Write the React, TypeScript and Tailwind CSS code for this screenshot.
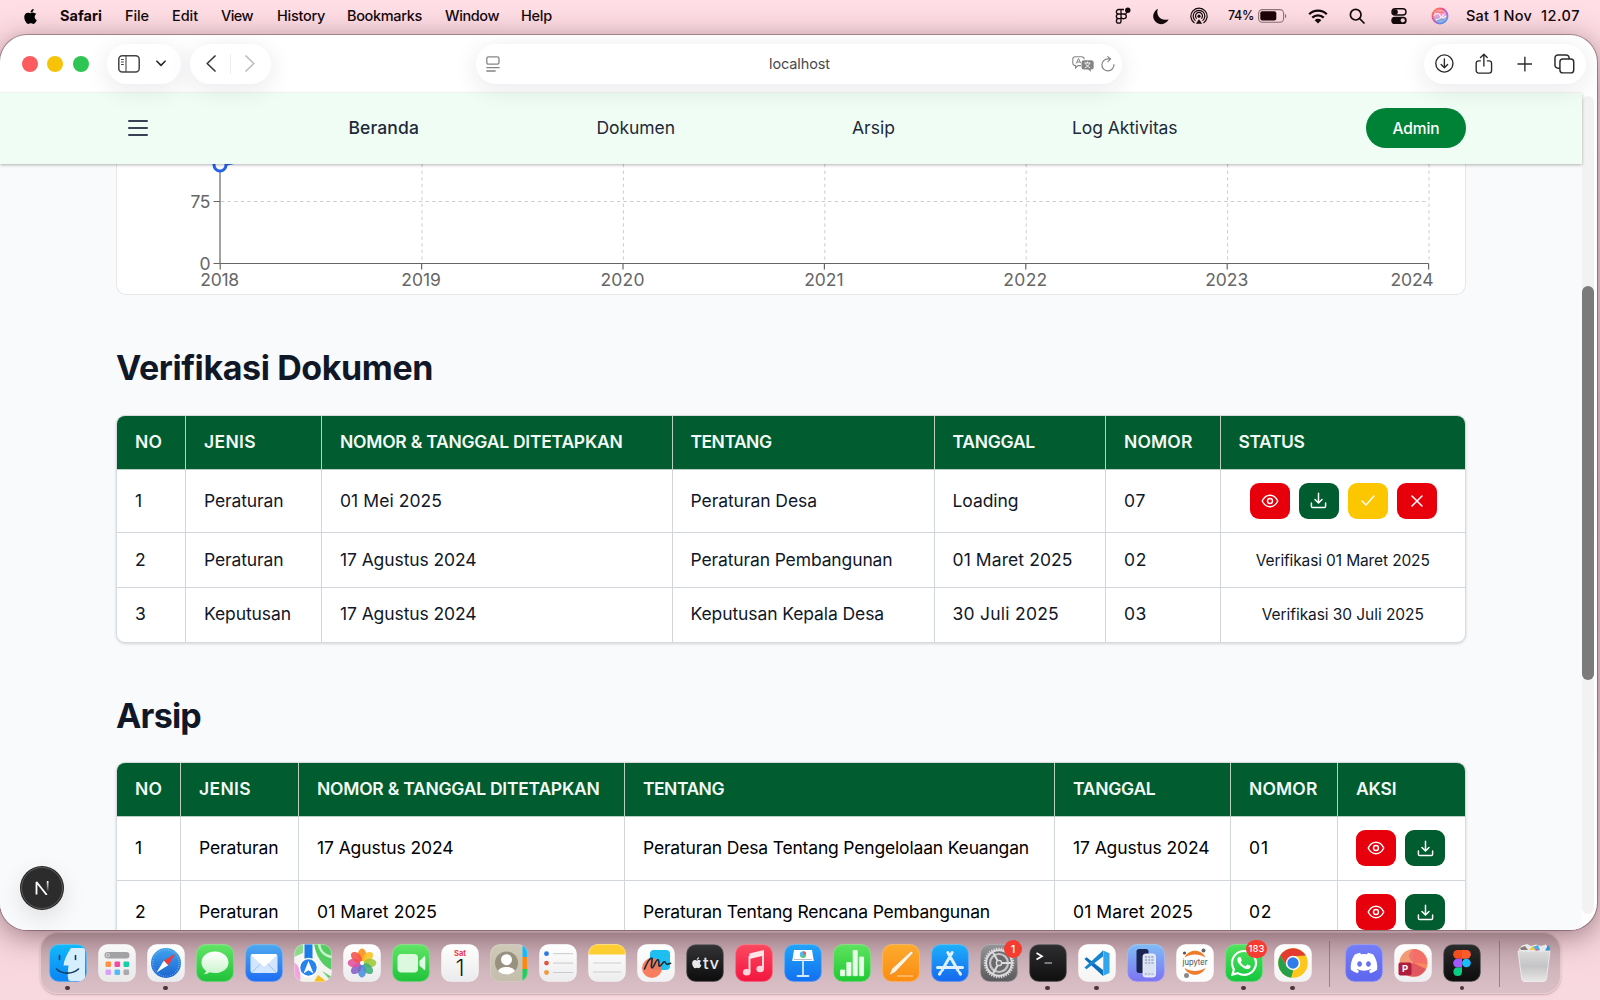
import React, { useLayoutEffect, useRef, useState } from "react";
import { FaApple, FaDiscord, FaWhatsapp } from "react-icons/fa";

/* A single line of text tracked so that it fills exactly `w` pixels. */
function T({ w, className = "", children }: { w: number; className?: string; children: string }) {
  const ref = useRef<HTMLSpanElement>(null);
  const [ls, setLs] = useState(0);
  useLayoutEffect(() => {
    const el = ref.current;
    if (!el) return;
    el.style.letterSpacing = "0px";
    const natural = el.getBoundingClientRect().width;
    const next = (w - natural) / children.length;
    el.style.letterSpacing = next + "px";
    setLs(next);
  }, [w, children]);
  return (
    <span ref={ref} className={"inline-block shrink-0 whitespace-pre " + className} style={{ letterSpacing: ls + "px" }}>
      {children}
    </span>
  );
}

/* ---------------------------------------------------------------- menu bar */

function MenuBar() {
  return (
    <div className="relative flex h-[35px] shrink-0 items-center pl-[22px] pr-[20px] pb-[3px] text-[14.500px] font-medium text-[#12080b]">
      <FaApple className="mr-[21px] size-[17px] text-black" />
      <T w={42} className="mr-[23px] font-bold">Safari</T>
      <T w={24} className="mr-[23px]">File</T>
      <T w={26} className="mr-[23px]">Edit</T>
      <T w={32} className="mr-[24px]">View</T>
      <T w={48} className="mr-[22px]">History</T>
      <T w={75} className="mr-[23px]">Bookmarks</T>
      <T w={54} className="mr-[22px]">Window</T>
      <T w={31}>Help</T>
      <div className="ml-auto flex items-center">
        <svg className="mr-[21px] h-[18px] w-[16px]" viewBox="0 0 16 18" fill="none" stroke="currentColor" strokeWidth="1.3">
          <path d="M6 2.5H3.6a2.2 2.2 0 000 4.5H6zM6 2.5h3M6 7H3.600a2.300 2.300 0 000 4.600H6zM6 7h3a2.300 2.300 0 110 4.600A2.300 2.300 0 016 9.300zM6 11.600H3.600A2.300 2.300 0 106 13.900zM6 7V2.500M6 7h4.500c1.500-.6 1-2 1-2" />
          <circle cx="12.800" cy="3.300" r="2.700" fill="currentColor" stroke="none" />
        </svg>
        <svg className="mr-[21px] size-[17px]" viewBox="0 0 17 17" fill="currentColor">
          <path d="M6 .8A8 8 0 1016.600 11.200 8 8 0 0113.500 11.800 7.800 7.800 0 016 .8z" />
        </svg>
        <svg className="mr-[20px] size-[18px]" viewBox="0 0 18 18" fill="none" stroke="currentColor" strokeWidth="1.200">
          <path d="M4.500 16A8.100 8.100 0 1113.500 16M5.500 13.700a5.800 5.800 0 117 0M6.700 11.600a3.500 3.500 0 114.600 0" />
          <circle cx="9" cy="9.200" r="1.600" fill="currentColor" stroke="none" />
          <path d="M9 12.200L5.800 16.800h6.400z" fill="currentColor" stroke="none" />
        </svg>
        <T w={26} className="mr-[4px] mt-[1px] text-[12.500px]">74%</T>
        <svg className="mr-[21px] h-[14px] w-[29px]" viewBox="0 0 29 14">
          <rect x=".6" y=".6" width="25" height="12.600" rx="3.800" fill="none" stroke="#8d7479" strokeWidth="1.100" />
          <rect x="2.300" y="2.300" width="16" height="9.200" rx="2" fill="#1d0408" />
          <path d="M27 4.700v4.600c1.700-.8 1.700-3.800 0-4.600z" fill="#8d7479" />
        </svg>
        <svg className="mr-[21px] h-[15px] w-[20px]" viewBox="0 0 20 15" fill="none" stroke="currentColor" strokeWidth="2.300">
          <path d="M1.200 5.300a12.500 12.500 0 0117.600 0M4.300 8.600a8.200 8.200 0 0111.400 0" />
          <path d="M10 14.500L6.700 11.200a4.700 4.700 0 016.600 0z" fill="currentColor" stroke="none" />
        </svg>
        <svg className="mr-[26px] size-[16px]" viewBox="0 0 16 16" fill="none" stroke="currentColor" strokeWidth="1.700">
          <circle cx="6.700" cy="6.700" r="5.300" />
          <path d="M10.500 10.500L15 15" strokeLinecap="round" />
        </svg>
        <svg className="mr-[24px] h-[16px] w-[16px]" viewBox="0 0 16 16">
          <rect x="1" y=".8" width="14" height="6.200" rx="3.100" fill="none" stroke="currentColor" strokeWidth="1.400" />
          <circle cx="4.200" cy="3.900" r="2.600" fill="currentColor" />
          <rect x=".3" y="8.700" width="15.400" height="7.300" rx="3.600" fill="currentColor" />
          <circle cx="11.800" cy="12.300" r="2.100" fill="#f8d5dc" />
        </svg>
        <svg className="mr-[17px] size-[18px]" viewBox="0 0 18 18" fill="none">
          <defs>
            <linearGradient id="siri" x1="0" y1="0" x2="1" y2="1">
              <stop offset="0" stopColor="#ff9d3c" />
              <stop offset=".35" stopColor="#f6498d" />
              <stop offset=".65" stopColor="#8e78f0" />
              <stop offset="1" stopColor="#22b8f5" />
            </linearGradient>
            <linearGradient id="siri2" x1="0" y1="0" x2="0" y2="1">
              <stop offset="0" stopColor="#ff6d6d" />
              <stop offset="1" stopColor="#35b4f8" />
            </linearGradient>
            <linearGradient id="siri3" x1="0" y1="0" x2="0" y2="1">
              <stop offset="0" stopColor="#ff8f7a" />
              <stop offset=".45" stopColor="#f58ad0" />
              <stop offset="1" stopColor="#56bdfa" />
            </linearGradient>
          </defs>
          <circle cx="9" cy="9" r="7.600" stroke="url(#siri)" strokeWidth="1.700" fill="url(#siri3)" fillOpacity=".75" />
          <path d="M3 8.500c3-3 5-2.500 6 0s3.500 3 6 .5M5 12.500c3 .5 5-1 8-5.500" stroke="#fff" strokeOpacity=".85" strokeWidth="1.300" />
          <path d="M5 5c3 0 5 1 8 0M6 14.500c2-2 4-2 7-1.500" stroke="url(#siri2)" strokeWidth="1" />
        </svg>
        <T w={66} className="mr-[9px]">Sat 1 Nov</T>
        <T w={39}>12.07</T>
      </div>
    </div>
  );
}

/* ----------------------------------------------------------- Safari toolbar */

const pill = "flex h-[40px] items-center rounded-full bg-white shadow-[0_5px_24px_rgba(40,30,60,0.10)]";

function Toolbar() {
  return (
    <div className="relative z-20 flex h-[58px] shrink-0 items-center pb-px pl-[21.500px] pr-[11px] text-[#2b2b2b]">
      <div className="flex w-[85.500px] gap-[9.500px]">
        <i className="size-[16px] rounded-full bg-[#fc5b5f]" />
        <i className="size-[16px] rounded-full bg-[#f7c308]" />
        <i className="size-[16px] rounded-full bg-[#2fc552]" />
      </div>
      <div className={pill + " w-[74px] pl-[11px]"}>
        <svg className="h-[18px] w-[22px]" viewBox="0 0 22 18" fill="none" stroke="#444" strokeWidth="1.500">
          <rect x=".8" y=".8" width="20.400" height="16.200" rx="3.500" />
          <path d="M8 1v16M3 4.500h2.800M3 7h2.800M3 9.500h2.800" strokeWidth="1.100" />
        </svg>
        <svg className="ml-[16px] h-[7px] w-[10px]" viewBox="0 0 11 7" fill="none" stroke="currentColor" strokeWidth="1.800" strokeLinecap="round" strokeLinejoin="round">
          <path d="M1 1l4.500 4.500L10 1" />
        </svg>
      </div>
      <div className={pill + " ml-[9px] w-[81px] px-[16px] justify-between"}>
        <svg className="h-[17px] w-[10px]" viewBox="0 0 10 17" fill="none" stroke="#3a3a3a" strokeWidth="1.700" strokeLinecap="round" strokeLinejoin="round">
          <path d="M9 1L1.200 8.500 9 16" />
        </svg>
        <i className="h-[20px] w-px bg-[#ececec]" />
        <svg className="h-[17px] w-[10px]" viewBox="0 0 10 17" fill="none" stroke="#bdbdbd" strokeWidth="1.700" strokeLinecap="round" strokeLinejoin="round">
          <path d="M1 1l7.800 7.500L1 16" />
        </svg>
      </div>
      <div className={pill + " ml-[205px] w-[646px] pl-[10px] pr-[7px]"}>
        <svg className="h-[16px] w-[14px]" viewBox="0 0 14 16" fill="none" stroke="#858585" strokeWidth="1.300" strokeLinecap="round">
          <rect x=".8" y=".8" width="12.200" height="7.400" rx="1.600" />
          <path d="M.8 11.600h12.400M.8 15h8.400" />
        </svg>
        <span className="flex flex-1 justify-end pr-[242px] pt-px text-[14.500px] text-[#4a4a4a]">
          <T w={61}>localhost</T>
        </span>
        <svg className="h-[16px] w-[22px]" viewBox="0 0 22 16">
          <path d="M3.300.8h6.400a2.500 2.500 0 012.500 2.400M9 9.600H6L3.600 12V9.600h-.3A2.500 2.500 0 01.8 7.100V3.300A2.500 2.500 0 013.300.8" fill="none" stroke="#858585" strokeWidth="1.100" />
          <path d="M4.200 7.500L6.500 2.600 8.700 7.200M5 6h3" fill="none" stroke="#858585" strokeWidth="1" />
          <path d="M12 4.300h7.200a2.500 2.500 0 012.500 2.500v4.200a2.500 2.500 0 01-2.500 2.500h-.4v2.300l-2.600-2.300H12A2.500 2.500 0 019.500 11V6.800A2.500 2.500 0 0112 4.300z" fill="#858585" />
          <path d="M12.500 7h6M15.500 5.700V7M17.600 7.200c-.7 2-2.500 3.800-4.600 4.500M13.500 7.200c.7 2 2.500 3.800 4.600 4.500" stroke="#fff" fill="none" strokeWidth=".9" />
        </svg>
        <svg className="ml-[7px] h-[16px] w-[14px]" viewBox="0 0 14 16" fill="none" stroke="#858585" strokeWidth="1.200" strokeLinecap="round" strokeLinejoin="round">
          <path d="M12.900 8.700A6 6 0 117 2.900h2.600M6.700.6l2.900 2.300L7 5.700" />
        </svg>
      </div>
      <div className={pill + " ml-auto w-[162px] pl-[11px] pr-[11px]"}>
        <svg className="size-[19px]" viewBox="0 0 19 19" fill="none" stroke="currentColor" strokeWidth="1.400" strokeLinecap="round" strokeLinejoin="round">
          <circle cx="9.500" cy="9.500" r="8.700" />
          <path d="M9.500 5v8.500M6.200 10.400l3.300 3.300 3.300-3.300" />
        </svg>
        <svg className="ml-[21px] h-[22px] w-[18px]" viewBox="0 0 18 22" fill="none" stroke="currentColor" strokeWidth="1.400" strokeLinecap="round" strokeLinejoin="round">
          <path d="M5.500 7.800H3.600A2.400 2.400 0 001.200 10.200v7.400A2.600 2.600 0 003.800 20.200h10.400a2.600 2.600 0 002.600-2.600v-7.400a2.400 2.400 0 00-2.400-2.400h-1.900M9 13V1.200M5.600 4.500L9 1.100l3.400 3.400" />
        </svg>
        <svg className="ml-[24px] size-[16px]" viewBox="0 0 16 16" fill="none" stroke="currentColor" strokeWidth="1.400" strokeLinecap="round">
          <path d="M8 1v14M1 8h14" />
        </svg>
        <svg className="ml-[22px] h-[20px] w-[21px]" viewBox="0 0 21 20" fill="none" stroke="currentColor" strokeWidth="1.500">
          <rect x="6" y="5" width="14" height="14" rx="3" />
          <path d="M5.800 14.200H4a3 3 0 01-3-3V3.800a3 3 0 013-3h8.300a3 3 0 013 3V5" />
        </svg>
      </div>
    </div>
  );
}

/* -------------------------------------------------------------------- page */

function Nav() {
  return (
    <div className="relative z-10 mr-[15px] flex h-[71px] shrink-0 items-center bg-[#effdf4] pb-px pl-[127.500px] pr-[116px] text-[17.500px] text-[#1e2939] shadow-[0_1px_3px_rgba(0,0,0,0.3)]">
      <svg className="h-[18px] w-[20px]" viewBox="0 0 20 18" stroke="#364153" strokeWidth="2" strokeLinecap="round">
        <path d="M1 2h18M1 9h18M1 16h18" />
      </svg>
      <T w={70.500} className="ml-[201px] font-medium">Beranda</T>
      <T w={78.500} className="ml-[177.500px]">Dokumen</T>
      <T w={43} className="ml-[177px]">Arsip</T>
      <T w={105.500} className="ml-[177px]">Log Aktivitas</T>
      <div className="ml-auto flex h-[40px] w-[100px] items-center justify-center rounded-full bg-[#008236] pt-px text-[15.500px] font-medium text-white">
        <T w={47}>Admin</T>
      </div>
    </div>
  );
}

const YEARS = ["2018", "2019", "2020", "2021", "2022", "2023", "2024"];
const YEAR_WIDTHS = [39, 39.500, 44, 39.500, 44, 43, 43];

function ChartCard() {
  return (
    <div className="h-[131px] w-[1350px] shrink-0 overflow-hidden rounded-b-[10px] border-x border-b border-[#e5e7eb] bg-white">
      <svg className="block h-[130px] w-[1348px]" viewBox="0 0 1348 130" fontFamily="Inter, sans-serif" fontSize="17.500" fill="#666">
        <path d="M104 37.500h1208" stroke="#ccc" strokeDasharray="3.300 3.300" />
        {YEARS.slice(1).map((y, i) => (
          <path key={y} d={`M${305 + i * 201.400} 0V99`} stroke="#ccc" strokeDasharray="3.300 3.300" />
        ))}
        <path d="M103 0V99.500M96.500 37.500h7M96.500 99.500h1215" stroke="#666" strokeWidth="1.200" fill="none" />
        {YEARS.map((y, i) => (
          <path key={y} d={`M${103.200 + i * 201.400} 99.500v6`} stroke="#666" strokeWidth="1.200" />
        ))}
        <path d="M103 1.500l14-3" stroke="#2563eb" strokeWidth="3" />
        <circle cx="103" cy="1" r="6" fill="#fff" stroke="#2563eb" strokeWidth="3" />
        <text x="93.500" y="44" textAnchor="end" textLength="20">75</text>
        <text x="93.500" y="106" textAnchor="end">0</text>
        {YEARS.map((y, i) => (
          <text key={y} x={i === 6 ? 1295 : 102.700 + i * 201.400} y="121.500" textAnchor="middle" textLength={YEAR_WIDTHS[i]}>
            {y}
          </text>
        ))}
      </svg>
    </div>
  );
}

type Cell = [string, number];

function EyeIcon() {
  return (
    <svg className="h-[14px] w-[18px]" viewBox="0 0 18 14" fill="none" stroke="#fff" strokeWidth="1.400">
      <path d="M1.200 7C3 3.300 5.700 1.300 9 1.300S15 3.300 16.800 7c-1.800 3.700-4.500 5.700-7.800 5.700S3 10.700 1.200 7z" />
      <circle cx="9" cy="7" r="2.500" />
    </svg>
  );
}

function DownloadIcon() {
  return (
    <svg className="size-[17px]" viewBox="0 0 17 17" fill="none" stroke="#fff" strokeWidth="1.500" strokeLinecap="round" strokeLinejoin="round">
      <path d="M8.500 1.200v9.600M5 7.500l3.500 3.500L12 7.500M1.400 11v3.300a1.300 1.300 0 001.300 1.300h11.600a1.300 1.300 0 001.300-1.300V11" />
    </svg>
  );
}

const btn = "flex h-[36px] w-[40px] items-center justify-center rounded-[9px]";

function Actions({ full = false }: { full?: boolean }) {
  return (
    <div className="flex gap-[9px]">
      <button className={btn + " bg-[#e7000b]"}><EyeIcon /></button>
      <button className={btn + " bg-[#015c2f]"}><DownloadIcon /></button>
      {full && (
        <>
          <button className={btn + " bg-[#fdc700]"}>
            <svg className="h-[11px] w-[14px]" viewBox="0 0 14 11" fill="none" stroke="#fff" strokeWidth="1.400" strokeLinecap="round" strokeLinejoin="round"><path d="M1 6l4 4 8-9" /></svg>
          </button>
          <button className={btn + " bg-[#e7000b]"}>
            <svg className="size-[12px]" viewBox="0 0 12 12" stroke="#fff" strokeWidth="1.500" strokeLinecap="round"><path d="M1 1l10 10M11 1L1 11" /></svg>
          </button>
        </>
      )}
    </div>
  );
}

function HeaderCells({ cells }: { cells: Cell[] }) {
  return (
    <>
      {cells.map(([t, w]) => (
        <div key={t} className="flex h-[54px] items-center border-r border-b border-[#b9cfc2] bg-[#015c2f] pl-[18px] text-[17.500px] font-semibold text-[#f3faf5] last:border-r-0">
          <T w={w}>{t}</T>
        </div>
      ))}
    </>
  );
}

function Row({ cells, cols, h, color, children }: { cells: Cell[]; cols: string; h: string; color: string; children: React.ReactNode }) {
  return (
    <div className={"grid border-b border-[#d1d5dc] last:border-b-0 " + cols + " " + h}>
      {cells.map(([t, w], i) => (
        <div key={i} className={"flex items-center border-r border-[#d1d5dc] pl-[18px] text-[17.500px] " + color}>
          <T w={w}>{t}</T>
        </div>
      ))}
      <div className="flex items-center">{children}</div>
    </div>
  );
}

const frame = "w-[1350px] shrink-0 overflow-hidden rounded-[9px] border border-[#d7dbe0] bg-white shadow-[0_1px_3px_rgba(0,0,0,0.15)]";
const cols1 = "grid-cols-[69px_136px_350.500px_262px_171.500px_114.500px_1fr]";
const cols2 = "grid-cols-[64px_118px_326px_430px_176px_107px_1fr]";

function VerifyTable() {
  return (
    <div className={frame}>
      <div className={"grid " + cols1}>
        <HeaderCells cells={[["NO", 27], ["JENIS", 52], ["NOMOR & TANGGAL DITETAPKAN", 282.500], ["TENTANG", 81], ["TANGGAL", 82.500], ["NOMOR", 68.500], ["STATUS", 66]]} />
      </div>
      <Row cols={cols1} h="h-[63.500px]" color="text-[#101828]" cells={[["1", 8], ["Peraturan", 79.500], ["01 Mei 2025", 102], ["Peraturan Desa", 126.500], ["Loading", 66], ["07", 22]]}>
        <div className="pl-[29px]"><Actions full /></div>
      </Row>
      <Row cols={cols1} h="h-[54.500px]" color="text-[#101828]" cells={[["2", 12], ["Peraturan", 79.500], ["17 Agustus 2024", 136.500], ["Peraturan Pembangunan", 202], ["01 Maret 2025", 120], ["02", 23]]}>
        <div className="w-full pt-px text-center text-[15.500px] text-[#101828]"><T w={174}>Verifikasi 01 Maret 2025</T></div>
      </Row>
      <Row cols={cols1} h="h-[54px]" color="text-[#101828]" cells={[["3", 12], ["Keputusan", 87], ["17 Agustus 2024", 136.500], ["Keputusan Kepala Desa", 193.500], ["30 Juli 2025", 106.500], ["03", 23]]}>
        <div className="w-full pt-px text-center text-[15.500px] text-[#101828]"><T w={162}>Verifikasi 30 Juli 2025</T></div>
      </Row>
    </div>
  );
}

function ArchiveTable() {
  return (
    <div className={frame}>
      <div className={"grid " + cols2}>
        <HeaderCells cells={[["NO", 27], ["JENIS", 52], ["NOMOR & TANGGAL DITETAPKAN", 282.500], ["TENTANG", 81], ["TANGGAL", 82.500], ["NOMOR", 68.500], ["AKSI", 40.500]]} />
      </div>
      <Row cols={cols2} h="h-[63.500px]" color="text-black" cells={[["1", 8], ["Peraturan", 79.500], ["17 Agustus 2024", 136.500], ["Peraturan Desa Tentang Pengelolaan Keuangan", 386], ["17 Agustus 2024", 136.500], ["01", 20]]}>
        <div className="pl-[18px]"><Actions /></div>
      </Row>
      <Row cols={cols2} h="h-[63.500px]" color="text-black" cells={[["2", 12], ["Peraturan", 79.500], ["01 Maret 2025", 120], ["Peraturan Tentang Rencana Pembangunan", 347], ["01 Maret 2025", 120], ["02", 23]]}>
        <div className="pl-[18px]"><Actions /></div>
      </Row>
    </div>
  );
}

/* -------------------------------------------------------------------- dock */

function Tile({ id, from, to, children }: { id: string; from: string; to: string; children?: React.ReactNode }) {
  return (
    <svg className="size-[38px] overflow-visible" viewBox="0 0 38 38" fontFamily="Inter, sans-serif">
      <defs>
        <linearGradient id={"bg-" + id} x1="0" y1="0" x2="0" y2="1">
          <stop offset="0" stopColor={from} />
          <stop offset="1" stopColor={to} />
        </linearGradient>
        <clipPath id={"cp-" + id}><rect x=".3" y=".3" width="37.400" height="37.400" rx="9.500" /></clipPath>
      </defs>
      <rect x=".3" y=".3" width="37.400" height="37.400" rx="9.500" fill={`url(#bg-${id})`} />
      <g clipPath={`url(#cp-${id})`}>{children}</g>
      <rect x=".6" y=".6" width="36.800" height="36.800" rx="9.200" fill="none" stroke="#fff" strokeOpacity=".3" strokeWidth=".7" />
    </svg>
  );
}

const PETALS = ["#fb8c14", "#fbbf1f", "#9fc837", "#3fae76", "#4a8fdc", "#8660c4", "#e2509c", "#f5504a"];
const GEAR = Array.from({ length: 36 }, (_, i) => i * 10);

function Slot({ dot = false, badge, children }: { dot?: boolean; badge?: string; children: React.ReactNode }) {
  return (
    <div className="relative flex w-[49px] shrink-0 flex-col items-center pt-[11px]">
      {children}
      {dot && <i className="mt-[3.500px] size-[4.500px] rounded-full bg-[#4a353c]" />}
      {badge && (
        <b className={"absolute top-[7px] flex h-[18px] items-center justify-center rounded-full bg-[#f63b30] font-medium text-white " + (badge.length > 1 ? "right-[1px] w-[21px] text-[9.500px]" : "right-[1px] w-[18px] text-[11px]")}>
          {badge}
        </b>
      )}
    </div>
  );
}

function Dock() {
  return (
    <div className="mx-auto flex h-[61.500px] w-[1521px] shrink-0 rounded-[18px] border border-[#e8ccd3] bg-linear-to-b from-[#c8a9b1] via-[#cfb3bb] to-[#dcc0c8] pl-[2.500px] shadow-[0_1px_2px_rgba(90,50,60,0.3)]">
      <Slot dot>
        <Tile id="finder" from="#12b9fb" to="#0a84f5">
          <path d="M22 4C18 10 15 16 14.500 21.500h5c-.8 6-1 9-.4 13 .3 2 1.400 2.500 3 2.500H33c2 0 3-1 3-3V6.500c0-1.700-1-2.500-2.600-2.500z" fill="#d5efff" />
          <path d="M10.500 11.500v4M26.500 11.500v4M7.500 25c6 5.500 15.500 5.500 22 0" stroke="#123a5c" strokeWidth="1.600" fill="none" strokeLinecap="round" />
        </Tile>
      </Slot>
      <Slot>
        <Tile id="apps" from="#f8f8f8" to="#e9e9ea">
          <rect x="6.500" y="8" width="25" height="6.500" rx="3.200" fill="#a2a2a5" />
          <circle cx="9.800" cy="11.200" r="1.700" fill="none" stroke="#eee" strokeWidth=".7" />
          {["#ff9140", "#f24aa4", "#14cfa5", "#d9a0f7", "#54b9f7", "#a9a9ab"].map((c, i) => (
            <rect key={c} x={7.500 + (i % 3) * 9} y={17.500 + Math.floor(i / 3) * 8} width="5.600" height="5.600" rx="1.300" fill={c} />
          ))}
        </Tile>
      </Slot>
      <Slot dot>
        <Tile id="safari" from="#fff" to="#e9ebee">
          <defs><linearGradient id="saf" x1="0" y1="0" x2="0" y2="1"><stop offset="0" stopColor="#3fa4ee" /><stop offset="1" stopColor="#1b63cf" /></linearGradient></defs>
          <circle cx="19" cy="19" r="15" fill="url(#saf)" />
          <circle cx="19" cy="19" r="13.200" fill="none" stroke="#fff" strokeOpacity=".6" strokeWidth="1.300" strokeDasharray=".5 1.800" />
          <path d="M28.500 9.500L16.800 16.800l4.400 4.400z" fill="#f23b3b" />
          <path d="M9.500 28.500l7.300-11.700 4.400 4.400z" fill="#fff" />
        </Tile>
      </Slot>
      <Slot>
        <Tile id="msg" from="#63e467" to="#1fc239">
          <defs><linearGradient id="bub" x1="0" y1="0" x2="0" y2="1"><stop offset="0" stopColor="#fff" /><stop offset="1" stopColor="#c9f4cd" /></linearGradient></defs>
          <path d="M19 7.500c-7.700 0-13.500 4.800-13.500 10.900 0 3.500 1.800 6.400 4.500 8.300-.2 1.400-1 2.500-2.300 3.500 2.300.1 4.300-.7 5.800-2 1.700.5 3.600.8 5.500.8 7.700 0 13.500-4.700 13.500-10.600S26.700 7.500 19 7.500z" fill="url(#bub)" />
        </Tile>
      </Slot>
      <Slot>
        <Tile id="mail" from="#4ea9f0" to="#1d6cf2">
          <rect x="5.500" y="10" width="27" height="19" rx="2.500" fill="#d4e6fd" />
          <path d="M6 11l11 10.500c1.200 1.100 2.800 1.100 4 0L32 11c-.5-.8-1-1-2-1H8c-1 0-1.500.2-2 1z" fill="#fff" />
          <path d="M6.500 28.500l9-8.500M31.500 28.500l-9-8.500" stroke="#8fbdf5" strokeWidth=".9" />
        </Tile>
      </Slot>
      <Slot>
        <Tile id="maps" from="#f8f8f6" to="#f1f1ee">
          <path d="M0 0h9v9L0 13z" fill="#8cd98c" />
          <path d="M20 0h18v26C28 22 22 12 20 0z" fill="#53cc64" />
          <path d="M25 0c1 7 6 12 13 13" stroke="#c8f2c8" strokeWidth="2.500" fill="none" />
          <path d="M0 18c6 4 7 11 6 20H0z" fill="#f3a3dc" />
          <path d="M20 38l4-7 9 7z" fill="#f6bf1d" />
          <path d="M28 27l10 6v5z" fill="#62cd6c" />
          <path d="M10.500 0h8v16h-8z" fill="#1d7ce6" />
          <circle cx="14.500" cy="23.500" r="9" fill="#2584ee" stroke="#fff" strokeWidth="1.500" />
          <path d="M14.500 17l5 12.500-5-3.300-5 3.300z" fill="#fff" />
        </Tile>
      </Slot>
      <Slot>
        <Tile id="photos" from="#fff" to="#ececee">
          {PETALS.map((c, i) => (
            <ellipse key={c} cx="19" cy="11" rx="4.200" ry="6.400" fill={c} fillOpacity=".88" transform={`rotate(${i * 45} 19 19)`} />
          ))}
          <circle cx="19" cy="19" r="2" fill="#fff" />
        </Tile>
      </Slot>
      <Slot>
        <Tile id="facetime" from="#62e566" to="#1fc23a">
          <rect x="5.500" y="10" width="20.500" height="18.500" rx="4" fill="#dcf8de" />
          <path d="M27.500 17l4.500-4.500c.7-.6 1.300-.3 1.300.6v12c0 1-.6 1.300-1.300.7L27.500 21.500z" fill="#e2fae4" />
        </Tile>
      </Slot>
      <Slot>
        <Tile id="cal" from="#fff" to="#ebebed">
          <text x="19" y="11.500" textAnchor="middle" fontSize="7.500" fontWeight="700" fill="#f4383d">Sat</text>
          <text x="19" y="32" textAnchor="middle" fontSize="23" fontWeight="300" fill="#1d1d1f">1</text>
        </Tile>
      </Slot>
      <Slot>
        <Tile id="contacts" from="#cfc9b8" to="#c4bdab">
          <rect x="32.500" y="0" width="6" height="13" fill="#19b8f8" />
          <rect x="32.500" y="13" width="6" height="12" fill="#f98a10" />
          <rect x="32.500" y="25" width="6" height="13" fill="#23cd5d" />
          <circle cx="16.500" cy="19" r="11.500" fill="#98917f" />
          <circle cx="16.500" cy="15.700" r="5.500" fill="#fff" />
          <path d="M8 27c2-5.500 15-5.500 17 0-4.500 4.700-12.500 4.700-17 0z" fill="#fff" />
        </Tile>
      </Slot>
      <Slot>
        <Tile id="rem" from="#fff" to="#ececee">
          {["#2b78e4", "#e3553d", "#f29a3b"].map((c, i) => (
            <g key={c}>
              <circle cx="7.500" cy={9.700 + i * 9.400} r="2.400" fill={c} />
              <path d={`M14 ${9.700 + i * 9.400}h20`} stroke="#c5c5c8" strokeWidth=".9" />
            </g>
          ))}
        </Tile>
      </Slot>
      <Slot>
        <Tile id="notes" from="#fff" to="#ededee">
          <rect width="38" height="10.500" fill="#fdce32" />
          <path d="M5 19h28M5 28h28" stroke="#cacacc" strokeWidth=".9" />
        </Tile>
      </Slot>
      <Slot>
        <Tile id="freeform" from="#fff" to="#f1f1f3">
          <rect x="13" y="6" width="20" height="20" rx="4" fill="#1fbef1" />
          <circle cx="15" cy="24" r="10" fill="#f97352" fillOpacity=".92" />
          <path d="M7.500 25c2-5 5-10.500 7-11 2-.3-1.500 9.500.5 9.800 2 .2 3.500-8.300 6-8 2 .3-.3 6.500 1.800 6.300 2-.2 2.800-4.500 4.800-4.300 1.500.2.8 3 3 2.500l3-1" fill="none" stroke="#1a2a38" strokeWidth="1.600" strokeLinecap="round" />
        </Tile>
      </Slot>
      <Slot>
        <Tile id="tv" from="#343436" to="#0c0c0d">
          <FaApple x={4.500} y={12.500} size={12.500} color="#e8e8ea" />
          <text x="17" y="24.500" fontSize="16.500" fontWeight="500" fill="#e8e8ea" textLength="16">tv</text>
        </Tile>
      </Slot>
      <Slot>
        <Tile id="music" from="#fb4a60" to="#f3153f">
          <path d="M14.500 10.500l13.500-3.200v17" fill="none" stroke="#ffe4e8" strokeWidth="1.900" />
          <path d="M14.500 10.500L28 7.300v4.500l-13.500 3.300z" fill="#ffe4e8" />
          <path d="M14.500 12v16" stroke="#ffe4e8" strokeWidth="1.900" />
          <ellipse cx="11.700" cy="28.200" rx="3.800" ry="3.200" fill="#ffd5dc" />
          <ellipse cx="25.200" cy="25" rx="3.800" ry="3.200" fill="#ffd5dc" />
        </Tile>
      </Slot>
      <Slot>
        <Tile id="keynote" from="#21a4f9" to="#126ff0">
          <path d="M10 6h18l1.800 11H8.200z" fill="#fff" />
          <circle cx="19" cy="10.500" r="3.200" fill="#54b9f7" />
          <path d="M19 10.500V7.300a3.200 3.200 0 013.200 3.200zM19 10.500l-2.500 2" fill="#f25b4a" />
          <path d="M19 10.500l2.700 1.700a3.200 3.200 0 01-4.400 1z" fill="#5cc95b" />
          <path d="M10 15.500h18" stroke="#b8bec6" />
          <path d="M19 17v14.500M13.500 32h11" stroke="#cfe6ff" strokeWidth="1.800" strokeLinecap="round" />
        </Tile>
      </Slot>
      <Slot>
        <Tile id="numbers" from="#5fe35f" to="#1fc932">
          <path d="M7.500 26h4.200v5.700H7.500zM13.800 18.500H18v13.200h-4.200zM20.100 6.500h4.200v25.200h-4.200zM26.400 13h4.200v18.700h-4.200z" fill="#e9fce9" stroke="#e9fce9" strokeWidth=".8" strokeLinejoin="round" />
        </Tile>
      </Slot>
      <Slot>
        <Tile id="pages" from="#fdab2d" to="#fb8c12">
          <path d="M28.500 7.500c1.500-.8 3 .5 2.300 2L13.500 28l-6.300 3.500 2.600-6.700z" fill="#fff3e0" stroke="#cf7d22" strokeWidth=".5" />
          <path d="M15 32h16" stroke="#ffd79f" strokeWidth="1.200" />
        </Tile>
      </Slot>
      <Slot>
        <Tile id="appstore" from="#1cb1fb" to="#1667ee">
          <path d="M21.200 8.500L11 26.500M16.800 8.500L27 26.500M6.500 23.500h25M9.500 28.500l-1 1.700M28.500 28.500l1 1.700" stroke="#dff0ff" strokeWidth="3" strokeLinecap="round" />
        </Tile>
      </Slot>
      <Slot badge="1">
        <Tile id="settings" from="#959598" to="#59595c">
          <circle cx="19" cy="19" r="12.800" fill="#6a6a6d" stroke="#dcdcde" strokeWidth="2" />
          {GEAR.map((a) => (
            <path key={a} d="M19 3.700v2.500" stroke="#dcdcde" strokeWidth="1.300" transform={`rotate(${a} 19 19)`} />
          ))}
          <circle cx="19" cy="19" r="9" fill="none" stroke="#c6c6c9" strokeWidth="2.200" />
          <path d="M19 19h12M19 19L13 8.600M19 19l-6 10.400" stroke="#dcdcde" strokeWidth="2" />
          <circle cx="19" cy="19" r="2.700" fill="#77777a" stroke="#dcdcde" strokeWidth="1.300" />
        </Tile>
      </Slot>
      <Slot dot>
        <Tile id="term" from="#2e2e30" to="#0f0f10">
          <path d="M7.500 9l5.500 3.300-5.500 3.300" stroke="#fff" strokeWidth="1.700" fill="none" />
          <path d="M15.500 19h7.500" stroke="#9a9a9c" strokeWidth="1.400" />
        </Tile>
      </Slot>
      <Slot dot>
        <Tile id="vscode" from="#fff" to="#f4f4f5">
          <path d="M6.500 15l2-1.700L25 26v6z" fill="#0a6ebd" />
          <path d="M6.500 23.500l2 1.700L25 12.500V6.500z" fill="#1685d1" />
          <path d="M24 6l7.500 3.300v19.700L24 32.300c.8-.3 1.300-1 1.300-2V8c0-.9-.5-1.700-1.300-2z" fill="#32a5ec" />
        </Tile>
      </Slot>
      <Slot>
        <Tile id="sim" from="#7fbdf6" to="#7d72f2">
          <rect x="9.500" y="5" width="12" height="24" rx="2.500" fill="#1c2551" />
          <rect x="16" y="10" width="12.500" height="23" rx="2.500" fill="#dbe2f1" stroke="#f7f9fd" strokeWidth=".8" />
          {[13, 16, 19].map((y) => (<path key={y} d={`M18 ${y}h8.500`} stroke="#9aa5bd" strokeWidth="1.700" strokeDasharray="2 1.200" />))}
          <path d="M18 30h8.500" stroke="#aab4ca" strokeWidth="1.700" strokeDasharray="2 1.200" />
        </Tile>
      </Slot>
      <Slot>
        <Tile id="jupyter" from="#fff" to="#fbfbfb">
          <path d="M8.500 13.500c4-9 17-9 21 0-6.500-4-14.500-4-21 0zM8.500 24c4 9 17 9 21 0-6.500 4-14.500 4-21 0z" fill="#f07b28" />
          <circle cx="8.500" cy="9" r="1.600" fill="#555" /><circle cx="27.500" cy="6.500" r="2" fill="#666" /><circle cx="10.500" cy="31.500" r="2.500" fill="#8a8a8a" />
          <text x="19" y="21" textAnchor="middle" fontSize="7.500" fill="#444" textLength="25">jupyter</text>
        </Tile>
      </Slot>
      <Slot dot badge="183">
        <Tile id="wa" from="#52e25f" to="#12c73c"><FaWhatsapp x={4} y={4} size={30} color="#fff" /></Tile>
      </Slot>
      <Slot dot>
        <Tile id="chrome" from="#fff" to="#f3f3f4">
          <circle cx="19" cy="19" r="14.800" fill="#fdc81b" />
          <path d="M6.200 11.600A14.800 14.800 0 0131.800 11.600L19 12.200 13 22.500z" fill="#e23c31" />
          <path d="M6.200 11.600l6.700 11 6.200 3.800-2 7.300A14.800 14.800 0 016.200 11.600z" fill="#23a04b" />
          <circle cx="19" cy="19" r="7.200" fill="#fff" /><circle cx="19" cy="19" r="5.700" fill="#2f7de9" />
        </Tile>
      </Slot>
      <i className="mr-[9.500px] ml-[12px] mt-[8px] h-[46px] w-px bg-[#9c8088]" />
      <Slot><Tile id="discord" from="#757ef7" to="#5c66ef"><FaDiscord x={4.500} y={4.500} size={29} color="#fff" /></Tile></Slot>
      <Slot>
        <Tile id="ppt" from="#fff" to="#eeeef0">
          <circle cx="19.500" cy="19" r="14" fill="#f39b76" />
          <path d="M19.500 5v14L32 25A14 14 0 0019.500 5z" fill="#fa8a5c" />
          <path d="M19.500 5c-6 4-6 9 0 14l13.500 1A14 14 0 0019.500 5z" fill="#ee5e6e" fillOpacity=".6" />
          <path d="M6 22a14 14 0 0026 3l-12.500-6z" fill="#d83a55" fillOpacity=".7" />
          <rect x="4.500" y="18.500" width="13" height="13" rx="2" fill="#b01c3c" />
          <text x="11" y="28.300" textAnchor="middle" fontSize="9.500" fontWeight="700" fill="#fff">P</text>
        </Tile>
      </Slot>
      <Slot dot>
        <Tile id="figma" from="#2b2b2c" to="#0c0c0d">
          <path d="M19 6h-4.500a4.300 4.300 0 000 8.700H19z" fill="#f24e1e" /><path d="M19 6h4.500a4.300 4.300 0 010 8.700H19z" fill="#ff5a2c" />
          <path d="M19 14.700h-4.500a4.300 4.300 0 000 8.700H19z" fill="#a259ff" /><circle cx="23.400" cy="19" r="4.350" fill="#1abcfe" />
          <path d="M19 23.400h-4.500A4.300 4.300 0 1019 27.800z" fill="#0acf83" />
        </Tile>
      </Slot>
      <i className="mr-[9.500px] ml-[12px] mt-[8px] h-[46px] w-px bg-[#9c8088]" />
      <Slot>
        <svg className="size-[38px]" viewBox="0 0 38 38">
          <defs><linearGradient id="bin" x1="0" y1="0" x2="0" y2="1"><stop offset="0" stopColor="#dcdcdd" /><stop offset=".5" stopColor="#c4c3c5" /><stop offset="1" stopColor="#e8e8e8" /></linearGradient></defs>
          <path d="M4 5l3-3.500L12 0l4 2 5-1.500L26 2l5-1.500 3 5-1 3H5z" fill="#e8e8ea" />
          <path d="M5 4l5-2 3 4H6z" fill="#857b78" /><path d="M14 6l4-4 3 4z" fill="#f0ca3c" /><path d="M18 3l5-2 2 5h-4z" fill="#48aee8" /><path d="M21 5l4 2h-5z" fill="#e54b92" /><path d="M30 7l3-6 2 3-1 4z" fill="#3193cf" />
          <path d="M3 7h32l-3.500 27.500c-.3 2-1.300 3-3.300 3H10c-2 0-3-1-3.300-3z" fill="url(#bin)" stroke="#f0f0f0" strokeWidth=".8" />
        </svg>
      </Slot>
    </div>
  );
}

/* --------------------------------------------------------------------- app */

export default function App() {
  return (
    <div className="flex h-[1000px] w-[1600px] flex-col overflow-hidden bg-linear-to-b from-[#ffdee5] via-[#ecc5cf] to-[#f9d9e0] font-['Inter',sans-serif]">
      <MenuBar />
      <div className="relative mb-[2.500px] flex h-[894.500px] w-[1597px] shrink-0 flex-col rounded-[27px] bg-white shadow-[0_0_0_1px_rgba(70,45,55,0.4),0_6px_30px_rgba(60,25,35,0.5)]">
        <div className="flex h-full flex-col overflow-hidden rounded-[27px]">
          <Toolbar />
          <Nav />
          <div className="flex min-h-0 flex-1">
            <main className="flex w-[1582px] shrink-0 flex-col overflow-hidden bg-[#f9fafc] pl-[116px] text-[#101828]">
              <ChartCard />
              <h2 className="mt-[52px] mb-[26.500px] h-[41px] shrink-0 text-[34px] font-bold leading-[41px]"><T w={317}>Verifikasi Dokumen</T></h2>
              <VerifyTable />
              <h2 className="mt-[52px] mb-[26.500px] h-[41px] shrink-0 text-[34px] font-bold leading-[41px]"><T w={85}>Arsip</T></h2>
              <ArchiveTable />
            </main>
          </div>
        </div>
        {/* overlay scrollbar */}
        <div className="absolute top-[61px] right-[3px] bottom-[16px] w-[12px] rounded-full bg-[#f2f2f3]">
          <div className="mt-[190px] h-[394px] rounded-full bg-[#7b7b7b]" />
        </div>
        {/* dev tools badge */}
        <div className="absolute bottom-[21px] left-[21px] flex size-[42px] items-center justify-center rounded-full border border-[#5a5a5a] bg-[#2c2c2c] shadow-[0_0_0_1px_#222,0_8px_24px_rgba(0,0,0,0.12)]">
          <svg className="h-[14px] w-[15px]" viewBox="0 0 15 14" fill="none" strokeWidth="1.800">
            <defs><linearGradient id="nfade" x1="0" y1="0" x2="0" y2="1"><stop offset="0" stopColor="#fff" /><stop offset="1" stopColor="#fff" stopOpacity=".1" /></linearGradient></defs>
            <path d="M1.500 13.500V1l10.300 13" stroke="#fff" strokeLinejoin="bevel" />
            <rect x="11.800" y="0" width="1.700" height="10" fill="url(#nfade)" />
          </svg>
        </div>
      </div>
      <Dock />
    </div>
  );
}
